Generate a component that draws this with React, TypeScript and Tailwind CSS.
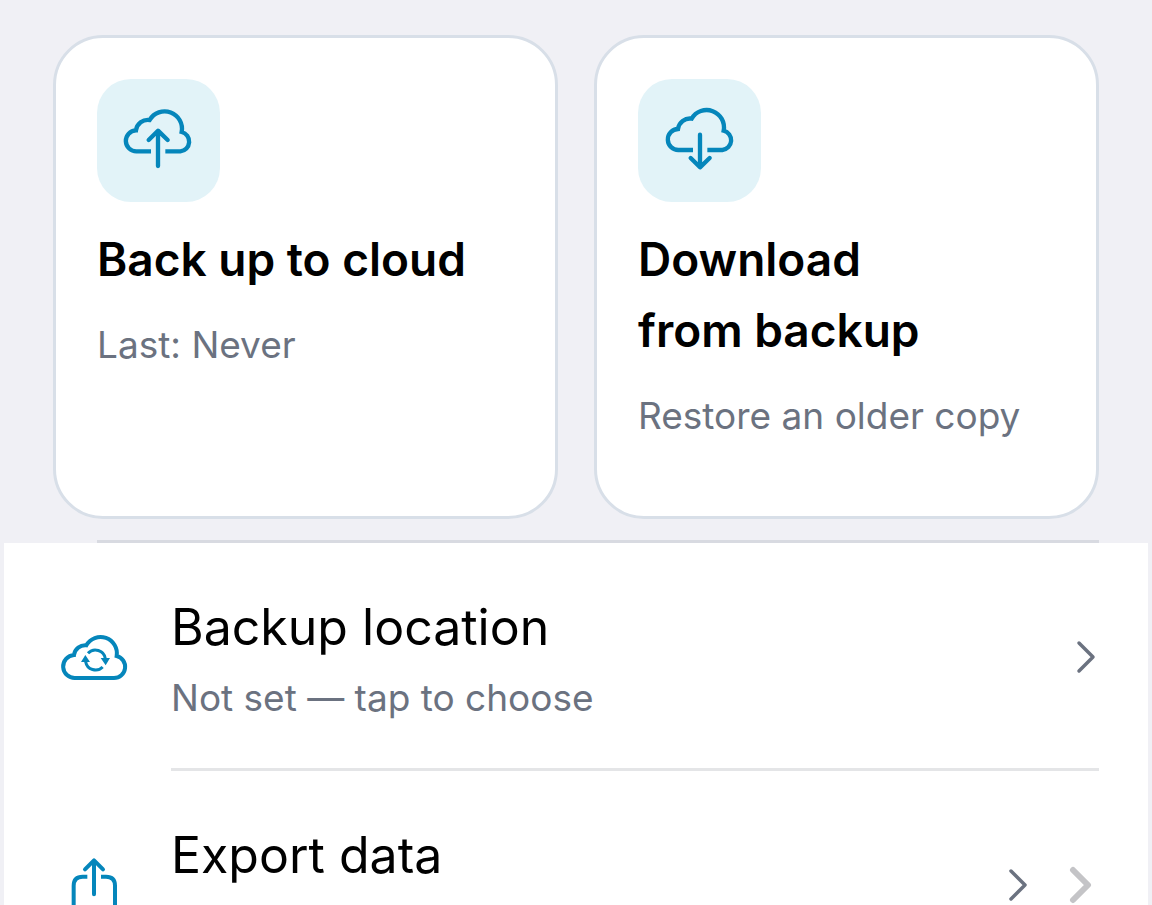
import type { ReactNode } from "react";

const CLOUD_OPEN =
  "M183 244H140A31.500 31.500 0 0 1 138 181A36 36 0 0 1 179 150A52 52 0 0 1 275 186A29.500 29.500 0 0 1 271 244H226";

function CloudUpIcon() {
  return (
    <svg viewBox="99 105 216 216" fill="none" stroke="currentColor" strokeWidth="13" className="size-18" aria-hidden="true">
      <path d={CLOUD_OPEN} />
      <path d="M204 184V288M176 210L204 182L233 210" strokeLinecap="round" strokeLinejoin="round" />
    </svg>
  );
}

function CloudDownIcon() {
  return (
    <svg viewBox="96 109 216 216" fill="none" stroke="currentColor" strokeWidth="13" className="size-18" aria-hidden="true">
      <path d={CLOUD_OPEN} />
      <path d="M204 198V294M176 268L204 296L233 268" strokeLinecap="round" strokeLinejoin="round" />
    </svg>
  );
}

function CloudSyncIcon() {
  return (
    <svg viewBox="180 363 204 216" fill="none" stroke="currentColor" strokeWidth="12" className="h-18 w-17" aria-hidden="true">
      <path d="M226 534A34.500 34.500 0 0 1 222 465A34 34 0 0 1 259 436A49 49 0 0 1 350 468A33.500 33.500 0 0 1 342 534Z" />
      <path d="M264 460A30 30 0 0 1 316 476M308 501A30 30 0 0 1 257 485" strokeWidth="9" />
      <path d="M302 474H330L317 496ZM243 486H270L256 465Z" fill="currentColor" stroke="none" />
    </svg>
  );
}

function ShareIcon() {
  return (
    <svg viewBox="30 26 204 216" fill="none" stroke="currentColor" strokeWidth="12" className="h-18 w-17" aria-hidden="true">
      <path d="M112 109H98Q71 109 71 136V201Q71 228 98 228H168Q195 228 195 201V136Q195 109 168 109H153" />
      <path d="M132 62V162M105 87L132 60L159 87" strokeLinecap="round" strokeLinejoin="round" />
    </svg>
  );
}

function Chevron({ bold = false }: { bold?: boolean }) {
  return (
    <svg
      viewBox="0 0 24 40"
      fill="none"
      stroke="currentColor"
      strokeWidth={bold ? 6 : 3.5}
      strokeLinecap="round"
      strokeLinejoin="round"
      className={bold ? "mr-1.5 h-10 w-6 text-[#c4c4c7]" : "h-10 w-6 text-[#6b7280]"}
      aria-hidden="true"
    >
      <path d={bold ? "M4 6L19 21L4 36" : "M4 7L18 21L4 35"} />
    </svg>
  );
}

function ActionCard({ icon, title, detail }: { icon: ReactNode; title: ReactNode; detail: string }) {
  return (
    <button
      type="button"
      className="flex h-[484px] flex-1 flex-col items-start rounded-[50px] border-3 border-[#d8dfe8] bg-white px-[41px] pt-[41px] text-left"
    >
      <span className="flex size-[123px] items-center justify-center rounded-[34px] bg-[#e2f3f8] text-[#0586bb]">{icon}</span>
      <span className="mt-[22px] text-[46px] leading-[71px] font-semibold text-black">{title}</span>
      <span className="mt-[22px] text-[37px] leading-[56px] text-[#6b7280]">{detail}</span>
    </button>
  );
}

function SettingsRow({
  icon,
  title,
  detail,
  trailing,
}: {
  icon: ReactNode;
  title: string;
  detail?: string;
  trailing: ReactNode;
}) {
  return (
    <li>
      <button type="button" className="flex w-full items-center pr-[49px] pl-14 text-left">
        <span className="w-[111px] shrink-0 text-[#0586bb]">{icon}</span>
        <span className="flex h-[228px] flex-1 items-center justify-between border-b-3 border-[#e4e5e7]">
          <span className="flex flex-col self-start pt-12">
            <span className="text-[50px] leading-[72px] text-black">{title}</span>
            {detail && <span className="mt-[7px] text-[37px] leading-[56px] text-[#6b7280]">{detail}</span>}
          </span>
          <span className="flex items-center gap-[38px]">{trailing}</span>
        </span>
      </button>
    </li>
  );
}

export default function App() {
  return (
    <main className="h-screen overflow-hidden bg-[#f0f0f5] font-['Inter',sans-serif]">
      <section className="flex gap-9 px-[53px] pt-[35px]">
        <ActionCard icon={<CloudUpIcon />} title="Back up to cloud" detail="Last: Never" />
        <ActionCard
          icon={<CloudDownIcon />}
          title={
            <>
              Download
              <br />
              from backup
            </>
          }
          detail="Restore an older copy"
        />
      </section>
      <div className="mt-[21px] mr-[53px] ml-[97px] h-[3px] bg-[#d8dae1]" />
      <ul className="mx-1 bg-white">
        <SettingsRow
          icon={<CloudSyncIcon />}
          title="Backup location"
          detail="Not set — tap to choose"
          trailing={<Chevron />}
        />
        <SettingsRow
          icon={<ShareIcon />}
          title="Export data"
          trailing={
            <>
              <Chevron />
              <Chevron bold />
            </>
          }
        />
      </ul>
    </main>
  );
}
